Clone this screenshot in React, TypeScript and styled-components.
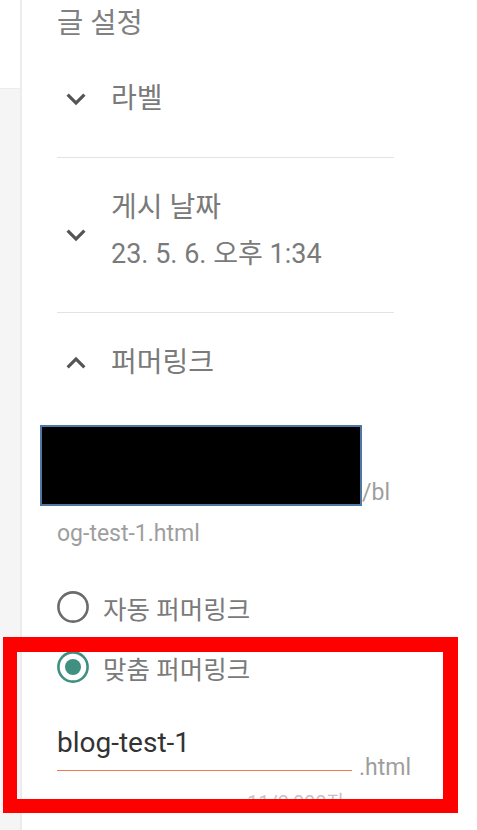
import React from 'react';
import styled, { createGlobalStyle } from 'styled-components';

const GlobalStyle = createGlobalStyle`
  html, body {
    margin: 0;
    padding: 0;
    background: #ffffff;
  }
  body {
    font-family: Roboto, "Noto Sans CJK KR", "Noto Sans", sans-serif;
    overflow: hidden;
  }
`;

const textGray = '#7a7a7a';
const iconGray = '#555555';

const Page = styled.div`
  position: relative;
  display: flex;
  height: 830px;
  overflow: hidden;
`;

const Rail = styled.div`
  width: 20px;
  flex-shrink: 0;
  display: flex;
  flex-direction: column;
  border-right: 2px solid #ececec;
`;

const RailTop = styled.div`
  height: 88px;
  background: #ffffff;
  border-bottom: 1px solid #ececec;
`;

const RailRest = styled.div`
  flex: 1;
  background: #f5f5f5;
`;

const Panel = styled.div`
  width: 337px;
  padding-left: 35px;
  display: flex;
  flex-direction: column;
`;

const Title = styled.h2`
  margin: 0;
  height: 48px;
  line-height: 48px;
  font-size: 28.5px;
  font-weight: 400;
  color: #808080;
  white-space: nowrap;
`;

const Section = styled.div<{ $top: number; $bottom: number; $divider?: boolean }>`
  padding-top: ${(p) => p.$top}px;
  padding-bottom: ${(p) => p.$bottom}px;
  border-bottom: ${(p) => (p.$divider ? '1px solid #e3e3e3' : 'none')};
`;

const Header = styled.div`
  display: flex;
  align-items: center;
  gap: 16px;
`;

const Chevron = styled.svg<{ $shift?: number }>`
  width: 38px;
  height: 38px;
  flex-shrink: 0;
  fill: ${iconGray};
  margin-top: ${(p) => p.$shift ?? 0}px;
`;

const HeaderText = styled.div`
  display: flex;
  flex-direction: column;
`;

const HeaderLine = styled.span<{ $size?: number; $tall?: boolean }>`
  font-size: ${(p) => p.$size ?? 28}px;
  line-height: ${(p) => (p.$tall ? 46 : 42)}px;
  color: ${textGray};
  white-space: nowrap;
`;

const UrlLine = styled.div`
  display: flex;
  align-items: flex-end;
  margin-top: 41px;
  margin-left: -17px;
`;

const Redaction = styled.div`
  width: 322px;
  height: 81px;
  flex-shrink: 0;
  box-sizing: border-box;
  background: #000000;
  border: 2px solid #4d79a6;
`;

const UrlText = styled.span`
  font-size: 23px;
  line-height: 26px;
  color: #9e9e9e;
  white-space: nowrap;
`;

const UrlRest = styled(UrlText)`
  display: block;
  margin-top: 13px;
  line-height: 30px;
`;

const RadioGroup = styled.div`
  display: flex;
  flex-direction: column;
  gap: 16px;
  margin-top: 36px;
`;

const RadioRow = styled.label`
  display: flex;
  align-items: center;
  gap: 14px;
  height: 44px;
`;

const RadioLabel = styled.span`
  font-size: 25.5px;
  color: ${textGray};
  white-space: nowrap;
`;

const FieldRow = styled.div`
  display: flex;
  align-items: flex-end;
  gap: 7px;
  margin-top: 37px;
`;

const Field = styled.div`
  width: 295px;
  flex-shrink: 0;
  padding-bottom: 10px;
  border-bottom: 1.5px solid #ea7b55;
`;

const FieldValue = styled.div`
  font-size: 28px;
  line-height: 34px;
  color: #333333;
  white-space: nowrap;
`;

const Suffix = styled.span`
  font-size: 23px;
  line-height: 26px;
  color: #9e9e9e;
  margin-bottom: -10px;
  white-space: nowrap;
`;

const Counter = styled.div`
  width: 288px;
  text-align: right;
  margin-top: 20px;
  font-size: 20px;
  line-height: 24px;
  color: #c4c4c4;
  white-space: nowrap;
`;

const Highlight = styled.div`
  position: absolute;
  left: 3px;
  top: 637px;
  width: 455px;
  height: 176px;
  box-sizing: border-box;
  border-style: solid;
  border-color: #ff0000;
  border-width: 15px 15px 14px 14px;
  pointer-events: none;
`;

const DownIcon = ({ shift }: { shift?: number }) => (
  <Chevron viewBox="0 0 24 24" $shift={shift}>
    <path d="M7.41 8.59L12 13.17l4.59-4.58L18 10l-6 6-6-6 1.41-1.41z" />
  </Chevron>
);

const UpIcon = () => (
  <Chevron viewBox="0 0 24 24">
    <path d="M7.41 15.41L12 10.83l4.59 4.58L18 14l-6-6-6 6z" />
  </Chevron>
);

const Radio = ({ checked }: { checked?: boolean }) => {
  const color = checked ? '#3f9080' : '#6b6b6b';
  return (
    <svg width="32" height="32" viewBox="0 0 32 32">
      <circle cx="16" cy="16" r="14.6" fill="none" stroke={color} strokeWidth="2.6" />
      {checked && <circle cx="16" cy="16" r="8" fill={color} />}
    </svg>
  );
};

const App = () => {
  return (
    <Page>
      <GlobalStyle />
      <Rail>
        <RailTop />
        <RailRest />
      </Rail>
      <Panel>
        <Title>글 설정</Title>

        <Section $top={30} $bottom={37} $divider>
          <Header>
            <DownIcon />
            <HeaderLine>라벨</HeaderLine>
          </Header>
        </Section>

        <Section $top={27} $bottom={35} $divider>
          <Header>
            <DownIcon shift={8} />
            <HeaderText>
              <HeaderLine $size={28} $tall>게시 날짜</HeaderLine>
              <HeaderLine $size={27} $tall>23. 5. 6. 오후 1:34</HeaderLine>
            </HeaderText>
          </Header>
        </Section>

        <Section $top={29} $bottom={0}>
          <Header>
            <UpIcon />
            <HeaderLine>퍼머링크</HeaderLine>
          </Header>

          <UrlLine>
            <Redaction />
            <UrlText>/bl</UrlText>
          </UrlLine>
          <UrlRest>og-test-1.html</UrlRest>

          <RadioGroup>
            <RadioRow>
              <Radio />
              <RadioLabel>자동 퍼머링크</RadioLabel>
            </RadioRow>
            <RadioRow>
              <Radio checked />
              <RadioLabel>맞춤 퍼머링크</RadioLabel>
            </RadioRow>
          </RadioGroup>

          <FieldRow>
            <Field>
              <FieldValue>blog-test-1</FieldValue>
            </Field>
            <Suffix>.html</Suffix>
          </FieldRow>
          <Counter>11/2,000자</Counter>
        </Section>
      </Panel>
      <Highlight />
    </Page>
  );
};

export default App;
